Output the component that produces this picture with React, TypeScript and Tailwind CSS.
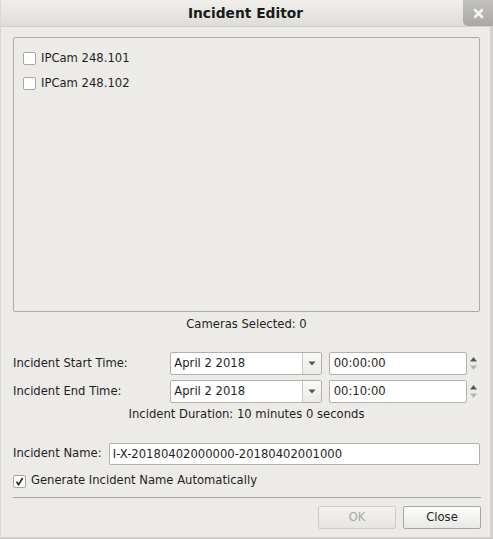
import React from 'react';

const font = { fontFamily: '"DejaVu Sans", "Liberation Sans", sans-serif' };

const CheckBox: React.FC<{ checked?: boolean }> = ({ checked }) => (
  <span className="w-[13px] h-[13px] shrink-0 bg-white border border-[#a9a7a3] rounded-[2px] flex items-center justify-center">
    {checked && (
      <svg width="9" height="9" viewBox="0 0 9 9">
        <path d="M1.5 4.8 L3.6 7.6 L7.6 1" stroke="#222" strokeWidth="1.6" fill="none" />
      </svg>
    )}
  </span>
);

const DateCombo: React.FC<{ value: string }> = ({ value }) => (
  <div className="w-[152px] h-[23px] flex bg-white border border-[#b3b1ad] rounded-[2px]">
    <span className="flex-1 pl-[3px] leading-[21px]">{value}</span>
    <span className="w-[19px] border-l border-[#c9c7c3] bg-gradient-to-b from-[#fafaf9] to-[#ebeae7] flex items-center justify-center">
      <svg width="8" height="5" viewBox="0 0 8 5">
        <path d="M0.5 0.5 L7.5 0.5 L4 4.5 Z" fill="#555" />
      </svg>
    </span>
  </div>
);

const TimeSpin: React.FC<{ value: string }> = ({ value }) => (
  <div className="w-[152px] h-[23px] flex items-stretch">
    <div className="flex-1 bg-white border border-[#b3b1ad] rounded-[2px] pl-[4px] leading-[21px]">{value}</div>
    <div className="w-[13px] flex flex-col items-center justify-center gap-[3px]">
      <svg width="7" height="5" viewBox="0 0 7 5">
        <path d="M0 4.5 L7 4.5 L3.5 0 Z" fill="#555" />
      </svg>
      <svg width="7" height="5" viewBox="0 0 7 5">
        <path d="M0 0.5 L7 0.5 L3.5 5 Z" fill="#b5b3af" />
      </svg>
    </div>
  </div>
);

export default function App() {
  return (
    <div
      style={font}
      className="w-[493px] h-[539px] bg-[#edebe8] text-[11.6px] text-[#1e1e1e] flex flex-col border-l border-[#dad8d4] border-r-[3px] border-r-[#d4d2ce] border-b-[2px] border-b-[#d0cec9]"
    >
      <div className="relative h-[27px] shrink-0 bg-gradient-to-b from-[#f0efec] to-[#dfddd9] border-b border-[#cfcdc9] flex items-center justify-center">
        <span className="font-bold text-[13.8px] text-[#1a1a1a]">Incident Editor</span>
        <div className="absolute right-[-3px] top-0 w-[30px] h-[26px] rounded-bl-[5px] bg-gradient-to-b from-[#c4c2be] to-[#a9a7a3] flex items-center justify-center">
          <svg width="11" height="11" viewBox="0 0 11 11">
            <path d="M2 2 L9 9 M9 2 L2 9" stroke="#f4f4f2" strokeWidth="2.6" strokeLinecap="round" />
          </svg>
        </div>
      </div>

      <div className="flex flex-col pl-[12px] pr-[10px]">
        <div className="mt-[10px] h-[275px] border border-[#aeaca8] rounded-[2px] pt-[14px] pl-[9px] flex flex-col gap-[12px]">
          <label className="flex items-center gap-[5px] h-[13px]">
            <CheckBox />
            <span>IPCam 248.101</span>
          </label>
          <label className="flex items-center gap-[5px] h-[13px]">
            <CheckBox />
            <span>IPCam 248.102</span>
          </label>
        </div>

        <div className="mt-[4px] h-[16px] leading-[16px] text-center">Cameras Selected: 0</div>

        <div className="mt-[20px] flex items-center h-[23px]">
          <span className="w-[158px]">Incident Start Time:</span>
          <DateCombo value="April 2 2018" />
          <span className="w-[7px]" />
          <TimeSpin value="00:00:00" />
        </div>
        <div className="mt-[5px] flex items-center h-[23px]">
          <span className="w-[158px]">Incident End Time:</span>
          <DateCombo value="April 2 2018" />
          <span className="w-[7px]" />
          <TimeSpin value="00:10:00" />
        </div>

        <div className="mt-[3px] h-[16px] leading-[16px] text-center">Incident Duration: 10 minutes 0 seconds</div>

        <div className="mt-[21px] flex items-center h-[22px]">
          <span className="w-[96px]">Incident Name:</span>
          <div className="w-[372px] h-[22px] bg-white border border-[#b3b1ad] rounded-[2px] pl-[3px] leading-[20px]">
            I-X-20180402000000-20180402001000
          </div>
        </div>

        <label className="mt-[9px] flex items-center gap-[5px] h-[14px]">
          <CheckBox checked />
          <span>Generate Incident Name Automatically</span>
        </label>

        <div className="mt-[9px] h-px bg-[#a9a7a3] w-[468px]" />

        <div className="mt-[8px] flex justify-end gap-[7px] w-[468px]">
          <button className="w-[78px] h-[23px] border border-[#cfcdc9] rounded-[2px] bg-gradient-to-b from-[#f3f2f0] to-[#e6e5e2] text-[#a9a7a3]">
            OK
          </button>
          <button className="w-[78px] h-[23px] border border-[#a8a6a2] rounded-[2px] bg-gradient-to-b from-[#fdfdfc] to-[#e9e8e5] text-[#1e1e1e]">
            Close
          </button>
        </div>
      </div>
    </div>
  );
}
